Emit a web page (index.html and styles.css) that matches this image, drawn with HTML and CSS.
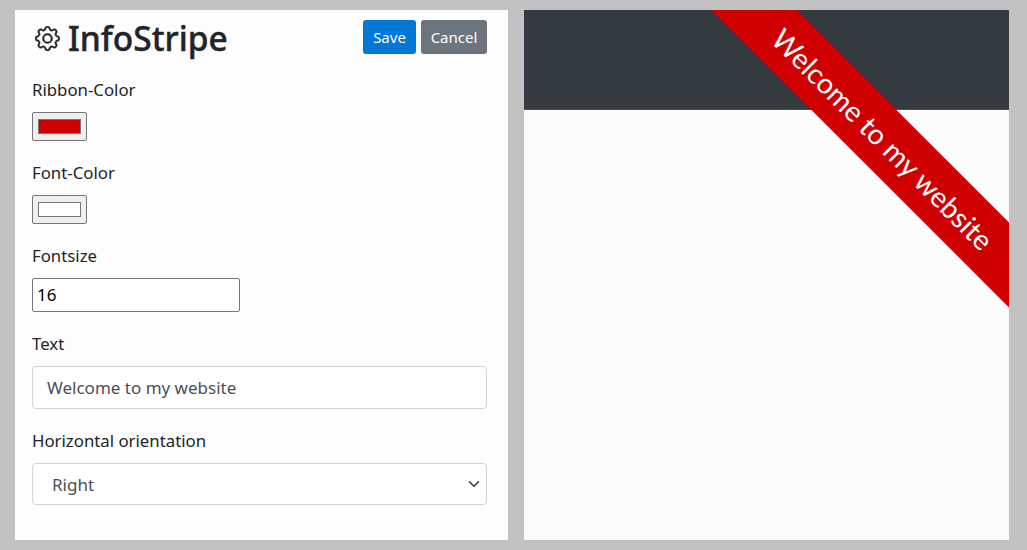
FILE: index.html
```html
<!DOCTYPE html>
<html lang="en">
<head>
<meta charset="utf-8">
<title>InfoStripe</title>
<link rel="stylesheet" href="styles.css">
</head>
<body>
<main class="layout">
  <section class="settings">
    <header class="head">
      <h1 class="title">
        <svg class="gear" viewBox="0 0 16 16" aria-hidden="true"><path d="M8 4.754a3.246 3.246 0 1 0 0 6.492 3.246 3.246 0 0 0 0-6.492zM5.754 8a2.246 2.246 0 1 1 4.492 0 2.246 2.246 0 0 1-4.492 0z"/><path d="M9.796 1.343c-.527-1.79-3.065-1.79-3.592 0l-.094.319a.873.873 0 0 1-1.255.52l-.292-.16c-1.64-.892-3.433.902-2.54 2.541l.159.292a.873.873 0 0 1-.52 1.255l-.319.094c-1.79.527-1.79 3.065 0 3.592l.319.094a.873.873 0 0 1 .52 1.255l-.16.292c-.892 1.64.901 3.434 2.541 2.54l.292-.159a.873.873 0 0 1 1.255.52l.094.319c.527 1.79 3.065 1.79 3.592 0l.094-.319a.873.873 0 0 1 1.255-.52l.292.16c1.64.893 3.434-.902 2.54-2.541l-.159-.292a.873.873 0 0 1 .52-1.255l.319-.094c1.79-.527 1.79-3.065 0-3.592l-.319-.094a.873.873 0 0 1-.52-1.255l.16-.292c.893-1.64-.902-3.433-2.541-2.54l-.292.159a.873.873 0 0 1-1.255-.52l-.094-.319zm-2.633.283c.246-.835 1.428-.835 1.674 0l.094.319a1.873 1.873 0 0 0 2.693 1.115l.291-.16c.764-.415 1.6.42 1.184 1.185l-.159.292a1.873 1.873 0 0 0 1.116 2.692l.318.094c.835.246.835 1.428 0 1.674l-.319.094a1.873 1.873 0 0 0-1.115 2.693l.16.291c.415.764-.42 1.6-1.185 1.184l-.291-.159a1.873 1.873 0 0 0-2.693 1.116l-.094.318c-.246.835-1.428.835-1.674 0l-.094-.319a1.873 1.873 0 0 0-2.692-1.115l-.292.16c-.764.415-1.6-.42-1.184-1.185l.159-.291A1.873 1.873 0 0 0 1.945 8.93l-.319-.094c-.835-.246-.835-1.428 0-1.674l.319-.094A1.873 1.873 0 0 0 3.06 4.377l-.16-.292c-.415-.764.42-1.6 1.185-1.184l.292.159a1.873 1.873 0 0 0 2.692-1.115l.094-.319z"/></svg>
        <span>InfoStripe</span>
      </h1>
      <div class="actions">
        <button class="btn btn-save" type="button">Save</button>
        <button class="btn btn-cancel" type="button">Cancel</button>
      </div>
    </header>
    <div class="field field-color">
      <label class="label">Ribbon-Color</label>
      <span class="swatch-btn"><span class="swatch swatch-red"></span></span>
    </div>
    <div class="field field-color">
      <label class="label">Font-Color</label>
      <span class="swatch-btn"><span class="swatch swatch-white"></span></span>
    </div>
    <div class="field field-size">
      <label class="label" for="size">Fontsize</label>
      <input id="size" class="native-input" type="text" value="16">
    </div>
    <div class="field field-text">
      <label class="label" for="text">Text</label>
      <input id="text" class="control" type="text" value="Welcome to my website">
    </div>
    <div class="field">
      <label class="label">Horizontal orientation</label>
      <div class="control select">
        <span>Right</span>
        <svg class="chevron" viewBox="0 0 16 16" aria-hidden="true"><path d="M2 5l6 6 6-6" fill="none" stroke="#343a40" stroke-width="2" stroke-linecap="round" stroke-linejoin="round"/></svg>
      </div>
    </div>
  </section>
  <section class="preview">
    <div class="preview-bar"></div>
    <div class="ribbon">Welcome to my website</div>
  </section>
</main>
</body>
</html>
```
FILE: styles.css
```css
* { box-sizing: border-box; }
html, body { height: 100%; }
body {
  margin: 0;
  background: #c2c2c2;
  color: #212529;
  font-family: "Noto Sans", "Open Sans", sans-serif;
  font-size: 16px;
  overflow: hidden;
}
.layout {
  display: flex;
  gap: 16px;
  height: 550px;
  padding: 10px 18px 10px 15px;
}
.settings {
  width: 493px;
  background: #fdfdfd;
  padding: 10px 21px 0 17px;
}
.head {
  display: flex;
  justify-content: space-between;
  align-items: flex-start;
  height: 60px;
}
.title {
  display: flex;
  align-items: center;
  gap: 8px;
  margin: 0;
  height: 36px;
  font-size: 33.5px;
  font-weight: 500;
  line-height: 36px;
  -webkit-text-stroke: 0.4px #212529;
}
.gear { width: 25px; height: 25px; margin-left: 3px; fill: #212529; stroke: #212529; stroke-width: .3; }
.actions { display: flex; gap: 5px; }
.btn {
  height: 34px;
  border: 0;
  border-radius: 3px;
  color: #fff;
  font: 15px "Noto Sans", sans-serif;
  padding: 0;
}
.btn-save { background: #0078d7; width: 53px; }
.btn-cancel { background: #6c757d; width: 66px; }
.field { display: flex; flex-direction: column; align-items: flex-start; }
.label { font-size: 16.8px; line-height: 20px; margin-bottom: 12px; font-weight: 400; }
.field-color { height: 83px; }
.swatch-btn {
  width: 55px;
  height: 29px;
  background: #efefef;
  border: 1px solid #767676;
  border-radius: 2px;
  padding: 6px 5px;
  display: flex;
}
.swatch { flex: 1; border: 1px solid #767676; }
.swatch-red { background: #d00000; }
.swatch-white { background: #fff; }
.native-input {
  width: 208px;
  height: 34px;
  border: 1px solid #767676;
  border-radius: 2px;
  background: #fff;
  color: #000;
  font: 17px "Noto Sans", sans-serif;
  padding: 0 4px 2px;
  outline: 0;
}
.field-size { height: 88px; }
.field-text { height: 97px; }
.control {
  width: 100%;
  height: 43px;
  border: 1px solid #ced4da;
  border-radius: 4px;
  background: #fff;
  color: #495057;
  font: 17px "Noto Sans", sans-serif;
  padding: 0 14px;
  outline: 0;
}
.select {
  height: 42px;
  display: flex;
  align-items: center;
  justify-content: space-between;
  padding: 0 6px 0 19px;
}
.chevron { width: 12px; height: 12px; }
.preview {
  position: relative;
  width: 485px;
  background: #fbfbfb;
  overflow: hidden;
}
.preview-bar {
  height: 100px;
  background: #343a40;
  border-bottom: 1px solid #4b5157;
}
.ribbon {
  position: absolute;
  left: 108.5px;
  top: 98.5px;
  width: 500px;
  height: 60px;
  background: #d00000;
  color: #fff;
  font-family: "Lato", sans-serif;
  font-size: 28.4px;
  line-height: 60px;
  text-align: center;
  transform: rotate(45deg);
}
```
